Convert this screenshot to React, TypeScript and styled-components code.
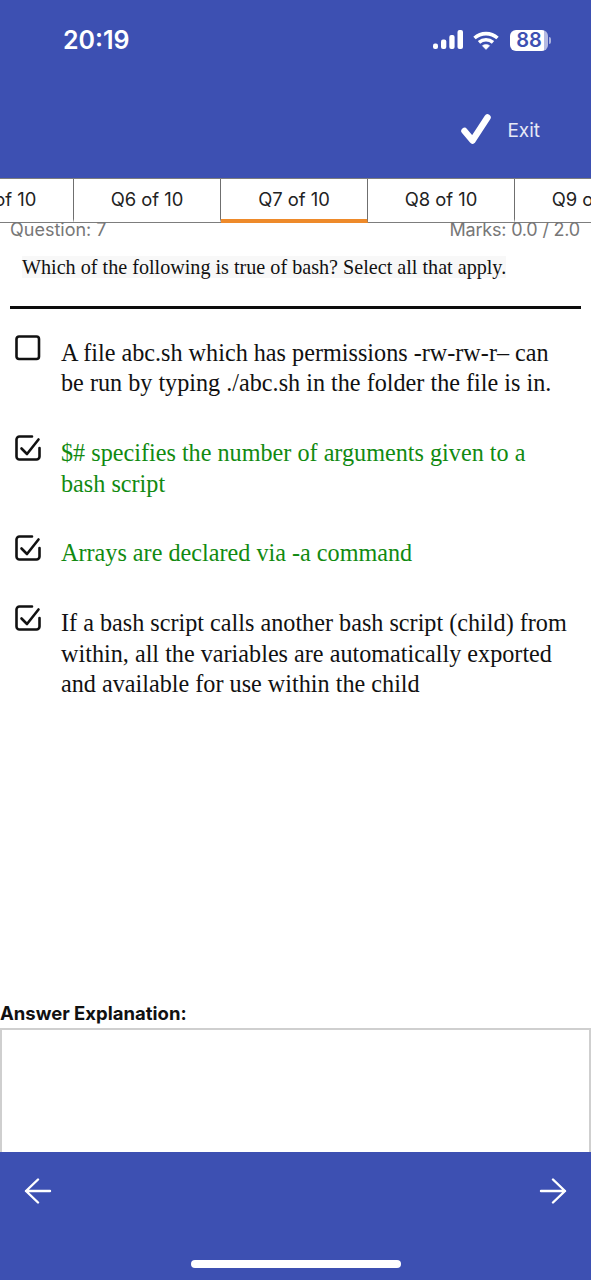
import styled, { createGlobalStyle } from 'styled-components'

const questionTabs = [5, 6, 7, 8, 9]

const options = [
  {
    id: 'a',
    checked: false,
    correct: false,
    text: 'A file abc.sh which has permissions -rw-rw-r– can be run by typing ./abc.sh in the folder the file is in.',
  },
  {
    id: 'b',
    checked: true,
    correct: true,
    text: '$# specifies the number of arguments given to a bash script',
  },
  {
    id: 'c',
    checked: true,
    correct: true,
    text: 'Arrays are declared via -a command',
  },
  {
    id: 'd',
    checked: true,
    correct: false,
    text: 'If a bash script calls another bash script (child) from within, all the variables are automatically exported and available for use within the child',
  },
]

function CheckIcon({ checked }: { checked: boolean }) {
  return (
    <CheckSvg viewBox="0 0 26 26" fill="none">
      {checked ? (
        <>
          <path
            d="M24.500 13V21.500a3 3 0 0 1-3 3H4.500a3 3 0 0 1-3-3V4.500a3 3 0 0 1 3-3H17"
            stroke="#111"
            strokeWidth="2.600"
            strokeLinecap="round"
          />
          <path
            d="M6.500 13.500l5.500 5.500L23.500 4.500"
            stroke="#111"
            strokeWidth="2.600"
            strokeLinecap="round"
            strokeLinejoin="round"
          />
        </>
      ) : (
        <rect x="1.500" y="1.500" width="22.500" height="22.500" rx="2.500" stroke="#111" strokeWidth="2.600" />
      )}
    </CheckSvg>
  )
}

export default function App() {
  return (
    <Screen>
      <GlobalStyle />

      <Header>
        <StatusBar>
          <Clock>20:19</Clock>
          <StatusIcons>
            <svg width="30" height="20" viewBox="0 0 30 20" fill="#fff">
              <rect x="0" y="13.500" width="5" height="5.500" rx="2" />
              <rect x="8" y="9.500" width="5.300" height="9.500" rx="2" />
              <rect x="16.300" y="5" width="5.300" height="14" rx="2" />
              <rect x="24.500" y="0" width="5.500" height="19" rx="2" />
            </svg>
            <svg width="26" height="19" viewBox="0 0 26 19" fill="none" stroke="#fff" strokeWidth="3.600">
              <path d="M1.500 7c6.600-5.800 16.400-5.800 23 0" />
              <path d="M6 11.400c4.100-3.500 9.900-3.500 14 0" />
              <path d="M13 18.500l-3.700-3.800c2.200-1.700 5.200-1.700 7.400 0z" fill="#fff" strokeWidth="0.500" />
            </svg>
            <Battery>
              <BatteryBody>88</BatteryBody>
              <BatteryCap />
            </Battery>
          </StatusIcons>
        </StatusBar>

        <HeaderActions>
          <svg width="32" height="34" viewBox="0 0 32 34" fill="none">
            <path
              d="M4.500 18L12.500 27.500L27.500 4.500"
              stroke="#fff"
              strokeWidth="6.500"
              strokeLinecap="round"
              strokeLinejoin="round"
            />
          </svg>
          <ExitLabel>Exit</ExitLabel>
        </HeaderActions>
      </Header>

      <TabStrip>
        {questionTabs.map(n => (
          <Tab key={n} $active={n === 7}>
            Q{n} of 10
          </Tab>
        ))}
      </TabStrip>

      <MetaRow>
        <span>Question: 7</span>
        <MarksLabel>Marks: 0.0 / 2.0</MarksLabel>
      </MetaRow>

      <QuestionBlock>
        <QuestionText>Which of the following is true of bash? Select all that apply.</QuestionText>
      </QuestionBlock>

      <Divider />

      <OptionList>
        {options.map(option => (
          <OptionRow key={option.id}>
            <CheckIcon checked={option.checked} />
            <OptionText $correct={option.correct}>{option.text}</OptionText>
          </OptionRow>
        ))}
      </OptionList>

      <Explanation>
        <ExplanationLabel>Answer Explanation:</ExplanationLabel>
        <ExplanationBox />
      </Explanation>

      <Footer>
        <FooterNav>
          <svg width="28" height="26" viewBox="0 0 28 26" fill="none" stroke="#fff" strokeWidth="2.400" strokeLinecap="round" strokeLinejoin="round">
            <path d="M26 13H2M14 1.500L2 13l12 11.500" />
          </svg>
          <svg width="28" height="26" viewBox="0 0 28 26" fill="none" stroke="#fff" strokeWidth="2.400" strokeLinecap="round" strokeLinejoin="round">
            <path d="M2 13h24M14 1.500L26 13 14 24.500" />
          </svg>
        </FooterNav>
        <HomeIndicator />
      </Footer>
    </Screen>
  )
}

const GlobalStyle = createGlobalStyle`
  html, body {
    margin: 0;
    padding: 0;
    background: #fff;
  }
`

const Screen = styled.div`
  width: 591px;
  height: 1280px;
  display: flex;
  flex-direction: column;
  overflow: hidden;
  background: #fff;
  font-family: Inter, 'Liberation Sans', sans-serif;
`

const Header = styled.header`
  height: 178px;
  flex-shrink: 0;
  background: #3d50b2;
  color: #fff;
  display: flex;
  flex-direction: column;
`

const StatusBar = styled.div`
  height: 80px;
  padding: 0 40px 0 63px;
  display: flex;
  align-items: center;
  justify-content: space-between;
`

const Clock = styled.div`
  font-size: 25px;
  font-weight: 600;
  line-height: 1;
`

const StatusIcons = styled.div`
  display: flex;
  align-items: center;
  gap: 10px;
`

const Battery = styled.div`
  display: flex;
  align-items: center;
  gap: 1px;
  margin-left: 1px;
`

const BatteryBody = styled.div`
  width: 38px;
  height: 21px;
  border-radius: 6px;
  background: linear-gradient(90deg, #fff 90%, #b4bae2 90%);
  color: #3d50b2;
  font-size: 20px;
  font-weight: 600;
  line-height: 21px;
  text-align: center;
`

const BatteryCap = styled.div`
  width: 2px;
  height: 7px;
  border-radius: 0 2px 2px 0;
  background: #aab2dd;
`

const HeaderActions = styled.div`
  display: flex;
  align-items: center;
  justify-content: flex-end;
  gap: 15px;
  padding: 0 51px 0 0;
  margin-top: 25px;
  height: 50px;
`

const ExitLabel = styled.span`
  font-size: 19px;
  color: #e6e8f6;
`

const TabStrip = styled.nav`
  height: 45px;
  flex-shrink: 0;
  margin-left: -73px;
  display: flex;
  border-top: 1px solid #7d7d7d;
  border-bottom: 1px solid #7d7d7d;
  box-sizing: border-box;
`

const Tab = styled.div<{ $active: boolean }>`
  width: 147px;
  flex-shrink: 0;
  box-sizing: border-box;
  border-right: 1px solid #6f6f6f;
  border-bottom: 4px solid ${p => (p.$active ? '#ee8a2a' : 'transparent')};
  margin-bottom: -1px;
  display: flex;
  align-items: center;
  justify-content: center;
  font-size: 18.400px;
  color: #222;
`

const MetaRow = styled.div`
  height: 12px;
  padding: 0 11px 0 10px;
  display: flex;
  justify-content: space-between;
  align-items: center;
  font-size: 18px;
  color: #777;
`

const MarksLabel = styled.span`
  letter-spacing: -0.200px;
`

const QuestionBlock = styled.div`
  padding: 19px 0 0 22px;
  height: 71px;
  flex-shrink: 0;
  box-sizing: border-box;
`

const QuestionText = styled.span`
  font-family: 'Liberation Serif', serif;
  font-size: 20.150px;
  line-height: 26px;
  color: #111;
  background: #f8f8f8;
`

const Divider = styled.div`
  height: 3px;
  flex-shrink: 0;
  margin: 0 10px;
  background: #0c0c0c;
`

const OptionList = styled.div`
  padding: 26px 20px 0 15px;
  display: flex;
  flex-direction: column;
  gap: 36.400px;
`

const OptionRow = styled.div`
  display: flex;
  align-items: flex-start;
  gap: 20px;
`

const CheckSvg = styled.svg`
  width: 26px;
  height: 26px;
  flex-shrink: 0;
`

const OptionText = styled.div<{ $correct: boolean }>`
  font-family: 'Liberation Serif', serif;
  font-size: 24.200px;
  line-height: 30.400px;
  margin-top: 3px;
  color: ${p => (p.$correct ? '#118a11' : '#111')};
`

const Explanation = styled.section`
  margin-top: auto;
  display: flex;
  flex-direction: column;
`

const ExplanationLabel = styled.div`
  font-size: 18.500px;
  font-weight: 700;
  line-height: 27px;
  height: 27px;
  color: #111;
`

const ExplanationBox = styled.div`
  height: 124px;
  margin-top: 1px;
  box-sizing: border-box;
  border: 2px solid #cfcfcf;
  border-bottom: none;
`

const Footer = styled.footer`
  height: 128px;
  flex-shrink: 0;
  background: #3d50b2;
  display: flex;
  flex-direction: column;
  align-items: center;
`

const FooterNav = styled.div`
  align-self: stretch;
  height: 77px;
  margin-bottom: 31px;
  padding: 0 24px;
  box-sizing: border-box;
  display: flex;
  align-items: center;
  justify-content: space-between;
`

const HomeIndicator = styled.div`
  width: 210px;
  height: 8px;
  border-radius: 4px;
  background: #fff;
`
